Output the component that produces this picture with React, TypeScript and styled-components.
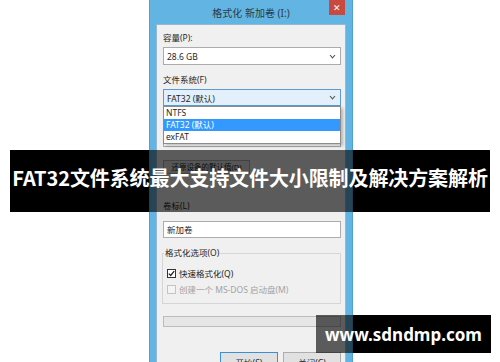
import React from 'react';
import styled, { createGlobalStyle } from 'styled-components';

const GlobalStyle = createGlobalStyle`
  html, body {
    margin: 0;
    padding: 0;
    background: #ffffff;
  }
  body {
    font-family: "Noto Sans", "Noto Sans CJK SC", sans-serif;
  }
`;

const Page = styled.div`
  position: relative;
  width: 500px;
  height: 362px;
  overflow: hidden;
  background: #ffffff;
`;

const Dialog = styled.div`
  margin-left: 149px;
  width: 204px;
  box-sizing: border-box;
  padding: 0 6px;
  background: #62b4e2;
  border-left: 1px solid #4f9fcf;
  border-right: 1px solid #4f9fcf;
  display: flex;
  flex-direction: column;
`;

const TitleBar = styled.div`
  height: 24px;
  margin: 0 -6px;
  display: grid;
  grid-template-columns: 1fr auto 1fr;
  align-items: start;
`;

const Title = styled.div`
  grid-column: 2;
  font-size: 10px;
  line-height: 26px;
  color: #2b3b48;
  white-space: nowrap;
`;

const CloseButton = styled.div`
  grid-column: 3;
  justify-self: end;
  margin-right: 7px;
  width: 16px;
  height: 15px;
  background: #c9493f;
  color: #fff;
  font-size: 9px;
  line-height: 15px;
  text-align: center;
`;

const Body = styled.div`
  background: #f0f0f0;
  border: 1px solid #96b9d2;
  padding: 0 4px 20px 6px;
  display: flex;
  flex-direction: column;
`;

const Label = styled.div<{ $top: number }>`
  margin-top: ${(p) => p.$top}px;
  font-size: 8.5px;
  line-height: 12px;
  height: 12px;
  color: #1f1f1f;
  white-space: nowrap;
`;

const SelectWrap = styled.div`
  position: relative;
  margin-top: 3px;
`;

const SelectBox = styled.div<{ $open?: boolean; $h: number }>`
  box-sizing: border-box;
  height: ${(p) => p.$h}px;
  border: 1px solid ${(p) => (p.$open ? '#5a9bd0' : '#acacac')};
  background: ${(p) => (p.$open ? '#e3f0fb' : '#ffffff')};
  display: flex;
  align-items: center;
  justify-content: space-between;
  padding: 0 4px 0 3px;
  font-size: 8.5px;
  color: #1f1f1f;
  white-space: nowrap;
`;

const Chevron = () => (
  <svg width="7" height="5" viewBox="0 0 7 5">
    <polyline points="1,1 3.5,3.8 6,1" fill="none" stroke="#555" strokeWidth="1.1" />
  </svg>
);

const DropList = styled.div`
  position: absolute;
  left: 0;
  right: 0;
  top: 100%;
  background: #ffffff;
  border: 1px solid #8c8c8c;
  box-shadow: 2px 2px 3px rgba(0, 0, 0, 0.25);
  z-index: 2;
`;

const DropItem = styled.div<{ $active?: boolean }>`
  height: 12px;
  line-height: 12px;
  padding-left: 2px;
  font-size: 8.5px;
  background: ${(p) => (p.$active ? '#3399ff' : 'transparent')};
  color: ${(p) => (p.$active ? '#ffffff' : '#1f1f1f')};
`;

const SmallButton = styled.div`
  align-self: flex-start;
  margin-top: 13px;
  width: 87px;
  height: 14px;
  box-sizing: border-box;
  border: 1px solid #adadad;
  background: #e1e1e1;
  font-size: 7.5px;
  line-height: 12px;
  text-align: center;
  color: #1f1f1f;
  white-space: nowrap;
`;

const TextInput = styled.div`
  margin-top: 9px;
  height: 17px;
  box-sizing: border-box;
  border: 1px solid #acacac;
  background: #ffffff;
  padding-left: 3px;
  font-size: 8.5px;
  line-height: 15px;
  color: #1f1f1f;
`;

const Group = styled.fieldset`
  margin: 9px 0 0 -1px;
  padding: 0 4px 8px 4px;
  border: 1px solid #d5d5d5;
  min-width: 0;
`;

const Legend = styled.legend`
  padding: 0 1px;
  margin-left: -3px;
  font-size: 8.5px;
  line-height: 12px;
  color: #1f1f1f;
`;

const CheckRow = styled.div<{ $disabled?: boolean; $top: number }>`
  display: flex;
  align-items: center;
  gap: 3px;
  margin-top: ${(p) => p.$top}px;
  height: 12px;
  font-size: 8.5px;
  color: ${(p) => (p.$disabled ? '#a3a3a3' : '#1f1f1f')};
  white-space: nowrap;
`;

const Box = styled.span<{ $disabled?: boolean }>`
  width: 9px;
  height: 9px;
  box-sizing: border-box;
  border: 1px solid ${(p) => (p.$disabled ? '#c4c4c4' : '#333333')};
  background: ${(p) => (p.$disabled ? '#f4f4f4' : '#ffffff')};
  display: flex;
  align-items: center;
  justify-content: center;
`;

const Progress = styled.div`
  margin-top: 12px;
  height: 11px;
  box-sizing: border-box;
  border: 1px solid #bcbcbc;
  background: #e6e6e6;
`;

const ButtonRow = styled.div`
  margin-top: 25px;
  display: flex;
  justify-content: flex-end;
  gap: 5px;
`;

const DialogButton = styled.div<{ $default?: boolean }>`
  width: 58px;
  height: 22px;
  box-sizing: border-box;
  border: 1px solid ${(p) => (p.$default ? '#3c8fd6' : '#adadad')};
  background: #e1e1e1;
  font-size: 8.5px;
  line-height: 20px;
  text-align: center;
  color: #1f1f1f;
`;

const Band = styled.div`
  position: absolute;
  left: 10px;
  top: 150px;
  width: 480px;
  height: 62px;
  background: linear-gradient(
    to right,
    #000 0,
    #000 139px,
    rgba(0, 0, 0, 0.62) 139px,
    rgba(0, 0, 0, 0.62) 343px,
    #000 343px,
    #000 100%
  );
  display: flex;
  align-items: center;
  justify-content: center;
  padding-bottom: 7px;
  box-sizing: border-box;
  z-index: 5;
`;

const BandTitle = styled.div`
  font-family: "Noto Sans CJK SC", sans-serif;
  font-weight: 700;
  font-size: 20px;
  color: #ffffff;
  white-space: nowrap;
  letter-spacing: -0.1px;
`;

const Watermark = styled.div`
  position: absolute;
  left: 316px;
  top: 315px;
  width: 175px;
  height: 38px;
  background: linear-gradient(
    to right,
    rgba(0, 0, 0, 0.62) 0,
    rgba(0, 0, 0, 0.62) 37px,
    #000 37px,
    #000 100%
  );
  display: flex;
  align-items: center;
  justify-content: center;
  font-family: "Noto Sans", sans-serif;
  font-weight: 700;
  font-size: 17px;
  color: #ffffff;
  z-index: 5;
`;

const App: React.FC = () => {
  const fileSystems = ['NTFS', 'FAT32 (默认)', 'exFAT'];

  return (
    <>
      <GlobalStyle />
      <Page>
        <Dialog>
          <TitleBar>
            <Title>格式化 新加卷 (I:)</Title>
            <CloseButton>✕</CloseButton>
          </TitleBar>
          <Body>
            <Label $top={7}>容量(P):</Label>
            <SelectWrap>
              <SelectBox $h={18}>
                <span>28.6 GB</span>
                <Chevron />
              </SelectBox>
            </SelectWrap>

            <Label $top={9}>文件系统(F)</Label>
            <SelectWrap>
              <SelectBox $h={17} $open>
                <span>FAT32 (默认)</span>
                <Chevron />
              </SelectBox>
              <DropList>
                {fileSystems.map((fs) => (
                  <DropItem key={fs} $active={fs.startsWith('FAT32')}>
                    {fs}
                  </DropItem>
                ))}
              </DropList>
            </SelectWrap>

            <Label $top={9}>分配单元大小(A)</Label>
            <SelectWrap>
              <SelectBox $h={17}>
                <span>32 KB</span>
                <Chevron />
              </SelectBox>
            </SelectWrap>

            <SmallButton>还原设备的默认值(D)</SmallButton>

            <Label $top={26}>卷标(L)</Label>
            <TextInput>新加卷</TextInput>

            <Group>
              <Legend>格式化选项(O)</Legend>
              <CheckRow $top={8}>
                <Box>
                  <svg width="7" height="7" viewBox="0 0 7 7">
                    <polyline points="0.8,3.6 2.7,5.5 6.2,1.2" fill="none" stroke="#222" strokeWidth="1.3" />
                  </svg>
                </Box>
                <span>快速格式化(Q)</span>
              </CheckRow>
              <CheckRow $top={4} $disabled>
                <Box $disabled />
                <span>创建一个 MS-DOS 启动盘(M)</span>
              </CheckRow>
            </Group>

            <Progress />

            <ButtonRow>
              <DialogButton $default>开始(S)</DialogButton>
              <DialogButton>关闭(C)</DialogButton>
            </ButtonRow>
          </Body>
        </Dialog>

        <Band>
          <BandTitle>FAT32文件系统最大支持文件大小限制及解决方案解析</BandTitle>
        </Band>
        <Watermark>www.sdndmp.com</Watermark>
      </Page>
    </>
  );
};

export default App;
